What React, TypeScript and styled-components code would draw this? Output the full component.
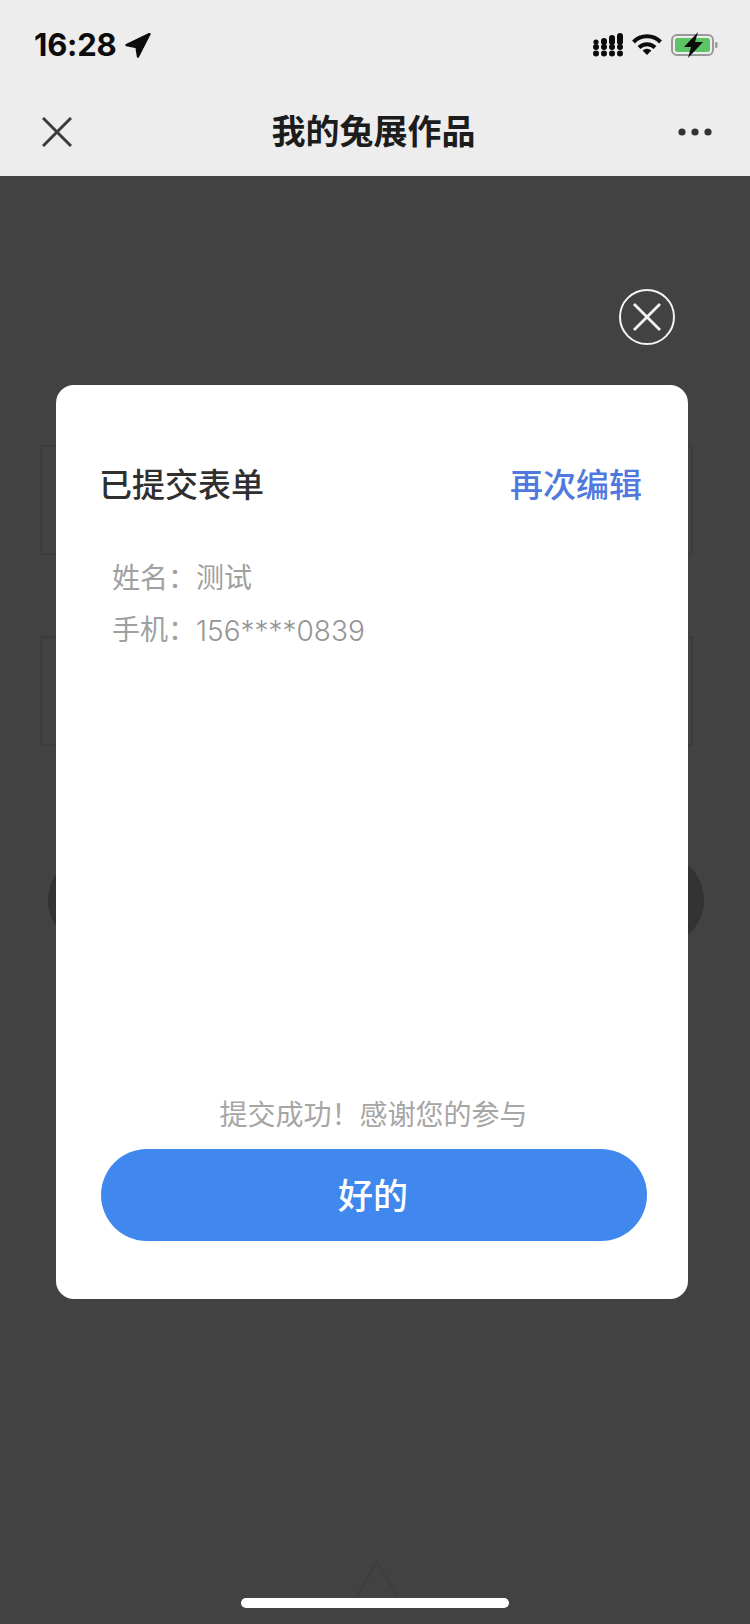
import React from 'react'
import styled, { createGlobalStyle } from 'styled-components'

const GlobalStyle = createGlobalStyle`
  html, body {
    margin: 0;
    padding: 0;
    background: #424242;
  }
  * {
    box-sizing: border-box;
  }
`

const CJK = `"Liberation Sans", "Noto Sans CJK SC", sans-serif`

const Screen = styled.div`
  position: relative;
  display: flex;
  flex-direction: column;
  width: 750px;
  height: 1624px;
  overflow: hidden;
  font-family: ${CJK};
`
const TopBar = styled.header`
  flex: 0 0 176px;
  display: flex;
  flex-direction: column;
  background: #ededed;
`
const StatusBar = styled.div`
  flex: 0 0 90px;
  display: flex;
  justify-content: space-between;
  align-items: center;
  padding: 0 32px 0 34px;
`
const TimeGroup = styled.div`
  display: flex;
  align-items: center;
  gap: 8px;
`
const Time = styled.span`
  margin-top: -2px;
  font-family: Inter, sans-serif;
  font-size: 31px;
  font-weight: 700;
  letter-spacing: -0.2px;
  color: #0c0c0c;
`
const StatusIcons = styled.div`
  display: flex;
  align-items: center;
  gap: 9px;
`
const NavBar = styled.nav`
  flex: 1;
  display: flex;
  justify-content: space-between;
  align-items: center;
  padding: 0 38px 0 42px;
  margin-top: -3px;
`
const NavTitle = styled.h1`
  margin: 0 3px 0 0;
  font-size: 34px;
  font-weight: 700;
  line-height: 44px;
  color: #1c1c1c;
`
const Page = styled.main`
  flex: 1;
  display: flex;
  flex-direction: column;
  align-items: flex-start;
  padding: 269px 0 0 40px;
  background: #424242;
`
const GhostBox = styled.div`
  width: 653px;
  height: 110px;
  border: 2px solid #3c3c3c;
  margin-bottom: 81px;
`
const GhostPill = styled.div`
  width: 656px;
  height: 92px;
  margin: 27px 0 0 8px;
  border-radius: 46px;
  background: #333;
`
const GhostArrow = styled.div`
  display: flex;
  margin: 614px 0 0 315px;
`
const Overlay = styled.div`
  position: absolute;
  top: 176px;
  left: 0;
  right: 0;
  bottom: 0;
  display: flex;
  flex-direction: column;
  padding: 113px 62px 0 56px;
`
const CloseButton = styled.button`
  align-self: flex-end;
  display: flex;
  width: 56px;
  height: 56px;
  margin: 0 13px 40px 0;
  padding: 0;
  border: none;
  background: none;
`
const Card = styled.section`
  display: flex;
  flex-direction: column;
  height: 914px;
  padding: 81px 46px 58px 44px;
  border-radius: 18px;
  background: #fff;
`
const CardHeader = styled.div`
  display: flex;
  justify-content: space-between;
  align-items: center;
  margin-bottom: 47px;
`
const CardTitle = styled.h2`
  margin: 0 0 0 -1px;
  font-size: 33px;
  font-weight: 500;
  line-height: 40px;
  color: #2f2f2f;
`
const EditLink = styled.a`
  font-size: 33px;
  font-weight: 500;
  line-height: 40px;
  color: #5079de;
`
const Field = styled.div`
  display: flex;
  padding-left: 12px;
  font-size: 28px;
  line-height: 52px;
  color: #a0a0a0;
`
const FieldLabel = styled.span`
  flex: 0 0 84px;
`
const FieldValue = styled.span`
  font-family: Inter, "Noto Sans CJK SC", sans-serif;
  font-weight: 300;
  color: #959595;
`
const Note = styled.p`
  margin: auto 0 13px;
  padding-left: 5px;
  font-size: 28px;
  line-height: 40px;
  text-align: center;
  color: #a6a6a6;
`
const OkButton = styled.button`
  height: 92px;
  margin-right: -5px;
  margin-left: 1px;
  padding: 0 2px 4px 0;
  border: none;
  border-radius: 46px;
  background: #4087ee;
  font-family: inherit;
  font-size: 35px;
  font-weight: 500;
  color: #fff;
`
const HomeBar = styled.div`
  position: absolute;
  left: 241px;
  bottom: 16px;
  width: 268px;
  height: 10px;
  border-radius: 5px;
  background: #fff;
`

const LocationIcon = () => (
  <svg width="26" height="25" viewBox="0 0 26 25">
    <path d="M24.5 1 L1.5 12 L11.5 14 L13 23.5 Z" fill="#0c0c0c" stroke="#0c0c0c" strokeWidth="2.4" strokeLinejoin="round" />
  </svg>
)

const SignalIcon = () => (
  <svg width="30" height="24" viewBox="0 0 30 24" fill="#0c0c0c">
    {[3, 11, 19, 27].map((x) => (
      <g key={x}>
        <circle cx={x} cy="20.5" r="3" />
        <circle cx={x} cy="14" r="3" />
      </g>
    ))}
    <circle cx="3" cy="9" r="2.6" />
    <rect x="8" y="5" width="6" height="7" rx="3" />
    <rect x="16" y="2" width="6" height="10" rx="3" />
    <rect x="24" y="0" width="6" height="12" rx="3" />
  </svg>
)

const WifiIcon = () => (
  <svg width="30" height="22" viewBox="0 0 30 22" fill="none" stroke="#0c0c0c" strokeWidth="4">
    <path d="M1.5 8 A19 19 0 0 1 28.5 8" />
    <path d="M7 13.5 A11.5 11.5 0 0 1 23 13.5" />
    <path d="M15 21 L10.6 16.6 A6.2 6.2 0 0 1 19.4 16.6 Z" fill="#0c0c0c" stroke="none" />
  </svg>
)

const BatteryIcon = () => (
  <svg width="47" height="26" viewBox="0 0 47 26">
    <rect x="1" y="3" width="41" height="20" rx="5" fill="none" stroke="#999" strokeWidth="2" />
    <rect x="4" y="6" width="35" height="14" rx="2.5" fill="#5dc466" />
    <rect x="44" y="10" width="2.5" height="6" rx="1.2" fill="#999" />
    <path d="M27 0 L13 15 H20 L17 26 L32 10 H24 Z" fill="#0c0c0c" />
  </svg>
)

const CrossIcon = () => (
  <svg width="30" height="30" viewBox="0 0 30 30" stroke="#3c3c3c" strokeWidth="3">
    <path d="M1 1 L29 29 M29 1 L1 29" />
  </svg>
)

const MoreIcon = () => (
  <svg width="34" height="8" viewBox="0 0 34 8" fill="#333">
    <circle cx="4" cy="4" r="3.6" />
    <circle cx="17" cy="4" r="3.6" />
    <circle cx="30" cy="4" r="3.6" />
  </svg>
)

const CircleCloseIcon = () => (
  <svg width="56" height="56" viewBox="0 0 56 56" fill="none" stroke="#f4f4f4">
    <circle cx="28" cy="28" r="27" strokeWidth="2" />
    <path d="M15 15 L41 41 M41 15 L15 41" strokeWidth="2.8" />
  </svg>
)

const UpArrowIcon = () => (
  <svg width="44" height="38" viewBox="0 0 44 38" fill="none" stroke="#3d3d3d" strokeWidth="2">
    <path d="M2 36 L22 2 L42 36" />
  </svg>
)

const App: React.FC = () => {
  return (
    <Screen>
      <GlobalStyle />
      <TopBar>
        <StatusBar>
          <TimeGroup>
            <Time>16:28</Time>
            <LocationIcon />
          </TimeGroup>
          <StatusIcons>
            <SignalIcon />
            <WifiIcon />
            <BatteryIcon />
          </StatusIcons>
        </StatusBar>
        <NavBar>
          <CrossIcon />
          <NavTitle>我的兔展作品</NavTitle>
          <MoreIcon />
        </NavBar>
      </TopBar>
      <Page>
        <GhostBox />
        <GhostBox />
        <GhostPill />
        <GhostArrow>
          <UpArrowIcon />
        </GhostArrow>
      </Page>
      <Overlay>
        <CloseButton>
          <CircleCloseIcon />
        </CloseButton>
        <Card>
          <CardHeader>
            <CardTitle>已提交表单</CardTitle>
            <EditLink>再次编辑</EditLink>
          </CardHeader>
          <Field>
            <FieldLabel>{'姓名\uFF1A'}</FieldLabel>
            <span>测试</span>
          </Field>
          <Field>
            <FieldLabel>{'手机\uFF1A'}</FieldLabel>
            <FieldValue>156****0839</FieldValue>
          </Field>
          <Note>{'提交成功\uFF01感谢您的参与'}</Note>
          <OkButton>好的</OkButton>
        </Card>
      </Overlay>
      <HomeBar />
    </Screen>
  )
}

export default App
